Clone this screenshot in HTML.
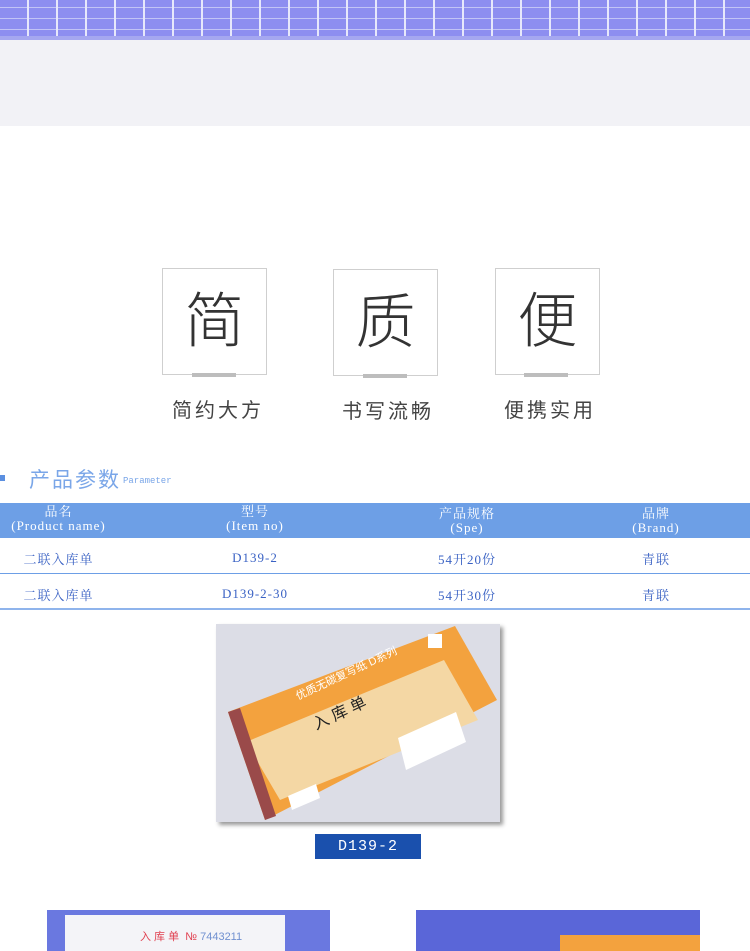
<!DOCTYPE html>
<html><head><meta charset="utf-8"><style>
body{margin:0;width:750px;height:951px;background:#fff;position:relative;overflow:hidden;font-family:"Liberation Sans","Noto Sans CJK SC",sans-serif}
.a{position:absolute}
.box{position:absolute;width:103px;height:105px;border:1px solid #cfcfcf;background:#fff;font-size:60px;color:#333;text-align:center;line-height:105px;font-weight:300}
.bar{position:absolute;width:44px;height:4px;background:#bdbdbd}
.lab{position:absolute;font-size:20px;color:#444;letter-spacing:3px}
.c{position:absolute;text-align:center;color:#3a62c4;font-family:"Liberation Serif","Noto Serif CJK SC",serif;font-size:13px;letter-spacing:1px}
.h{color:#fff;line-height:14px}
</style></head><body>
<div class="a" style="left:0;top:0;width:750px;height:40px;background:repeating-linear-gradient(90deg,#8d8ef0 0 27px,#e6e8fb 27px 29px),#8d8ef0"></div>
<div class="a" style="left:0;top:0;width:750px;height:40px;background:repeating-linear-gradient(0deg,transparent 0 10px,rgba(230,232,250,.6) 10px 11px)"></div>
<div class="a" style="left:0;top:36px;width:750px;height:4px;background:#a5a7f0"></div>
<div class="a" style="left:0;top:40px;width:750px;height:86px;background:#f2f2f6"></div>

<div class="box" style="left:162px;top:268px">简</div><div class="bar" style="left:192px;top:373px"></div>
<div class="box" style="left:333px;top:269px">质</div><div class="bar" style="left:363px;top:374px"></div>
<div class="box" style="left:495px;top:268px">便</div><div class="bar" style="left:524px;top:373px"></div>
<div class="lab" style="left:172px;top:394px">简约大方</div>
<div class="lab" style="left:342px;top:395px">书写流畅</div>
<div class="lab" style="left:504px;top:394px">便携实用</div>

<div class="a" style="left:0;top:475px;width:5px;height:6px;background:#5b8fe0"></div>
<div class="a" style="left:29px;top:464px;font-size:21px;color:#7aa6e8;letter-spacing:2px">产品参数</div>
<div class="a" style="left:123px;top:476px;font-size:9px;color:#7aa6e8;font-family:'Liberation Mono',monospace">Parameter</div>

<div class="a" style="left:0;top:503px;width:750px;height:35px;background:#6d9fe6"></div>
<div class="c h" style="left:0;width:117px;top:505px">品名<br>(Product name)</div>
<div class="c h" style="left:195px;width:120px;top:505px">型号<br>(Item no)</div>
<div class="c h" style="left:407px;width:120px;top:507px">产品规格<br>(Spe)</div>
<div class="c h" style="left:596px;width:120px;top:507px">品牌<br>(Brand)</div>
<div class="a" style="left:0;top:573px;width:750px;height:1px;background:#6d9fe6"></div>
<div class="a" style="left:0;top:608px;width:750px;height:2px;background:#8fb4ec"></div>
<div class="c" style="left:0;width:117px;top:549px">二联入库单</div>
<div class="c" style="left:195px;width:120px;top:550px">D139-2</div>
<div class="c" style="left:407px;width:120px;top:549px">54开20份</div>
<div class="c" style="left:596px;width:120px;top:549px">青联</div>
<div class="c" style="left:0;width:117px;top:585px">二联入库单</div>
<div class="c" style="left:195px;width:120px;top:586px">D139-2-30</div>
<div class="c" style="left:407px;width:120px;top:585px">54开30份</div>
<div class="c" style="left:596px;width:120px;top:585px">青联</div>

<svg class="a" style="left:216px;top:624px;box-shadow:3px 3px 4px #999" width="284" height="198" viewBox="0 0 284 198">
<rect width="284" height="198" fill="#dcdde6"/>
<polygon points="12,88 239,2 281,76 49,196" fill="#f3a23e"/>
<polygon points="30,118 228,36 262,96 64,176" fill="#f4d7a4"/>
<polygon points="12,88 24,84 60,192 49,196" fill="#9a4a4a"/>
<text x="100" y="106" font-size="16" transform="rotate(-25 100 106)" fill="#222">入 库 单</text>
<text x="82" y="76" font-size="11" transform="rotate(-25 82 76)" fill="#fff">优质无碳复写纸 D系列</text>
<rect x="212" y="10" width="14" height="14" fill="#fff"/>
<polygon points="182,114 240,88 250,118 190,146" fill="#fff"/>
<polygon points="72,172 100,160 104,174 76,186" fill="#fff"/>
</svg>
<div class="a" style="left:315px;top:834px;width:106px;height:25px;background:#1a50ad;color:#fff;text-align:center;line-height:25px;font-family:'Liberation Mono',monospace;font-size:15px;letter-spacing:1px">D139-2</div>

<div class="a" style="left:47px;top:910px;width:283px;height:41px;background:#6a78e0"></div>
<div class="a" style="left:65px;top:915px;width:220px;height:36px;background:#f4f4f8"></div>
<div class="a" style="left:140px;top:928px;font-size:11px;color:#e04050">入 库 单 &nbsp;№ <span style="color:#7090d0">7443211</span></div>
<div class="a" style="left:416px;top:910px;width:284px;height:41px;background:#5a66d8"></div>
<div class="a" style="left:560px;top:935px;width:140px;height:16px;background:#f3a23e"></div>
</body></html>
